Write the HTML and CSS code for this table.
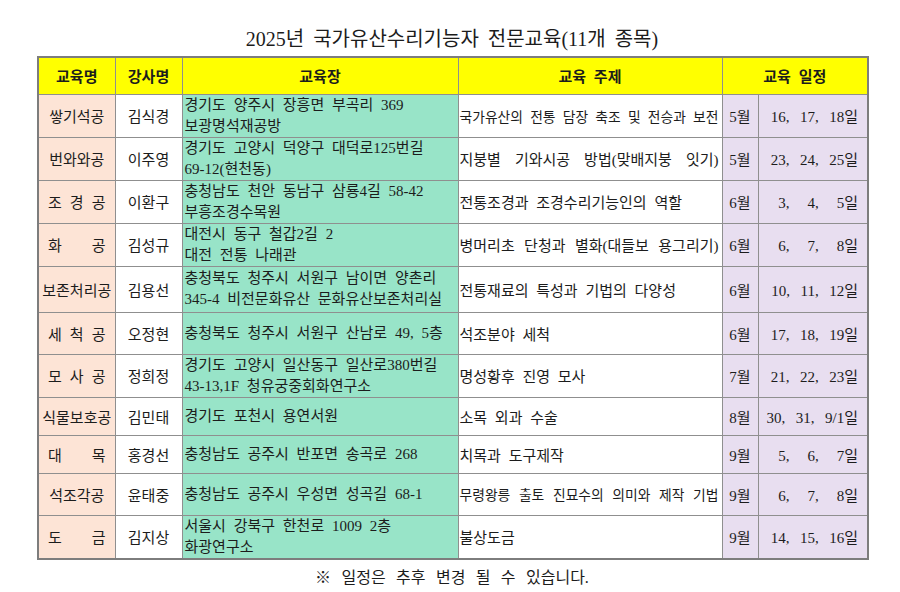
FILE: index.html
```html
<!DOCTYPE html>
<html lang="ko">
<head>
<meta charset="utf-8">
<title>2025년 국가유산수리기능자 전문교육</title>
<link rel="stylesheet" href="styles.css">
</head>
<body>
<div class="page">
  <h1 class="title">2025년 국가유산수리기능자 전문교육(11개 종목)</h1>
  <table class="sched">
    <colgroup>
      <col class="w1"><col class="w2"><col class="w3"><col class="w4"><col class="w5"><col class="w6">
    </colgroup>
    <thead>
      <tr class="h0">
        <th>교육명</th>
        <th>강사명</th>
        <th>교육장</th>
        <th>교육 주제</th>
        <th colspan="2">교육 일정</th>
      </tr>
    </thead>
    <tbody>
      <tr class="r43">
        <td class="c1">쌓기석공</td>
        <td class="c2">김식경</td>
        <td class="c3">경기도 양주시 장흥면 부곡리 369<br>보광명석재공방</td>
        <td class="c4 fit">국가유산의 전통 담장 축조 및 전승과 보전</td>
        <td class="c5">5월</td>
        <td class="c6">16, 17, 18일</td>
      </tr>
      <tr class="r41">
        <td class="c1">번와와공</td>
        <td class="c2">이주영</td>
        <td class="c3">경기도 고양시 덕양구 대덕로125번길<br>69-12(현천동)</td>
        <td class="c4 fit wide">지붕별 기와시공 방법(맞배지붕 잇기)</td>
        <td class="c5">5월</td>
        <td class="c6">23, 24, 25일</td>
      </tr>
      <tr class="r43">
        <td class="c1"><div class="spread"><span>조</span><span>경</span><span>공</span></div></td>
        <td class="c2">이환구</td>
        <td class="c3">충청남도 천안 동남구 삼룡4길 58-42<br>부흥조경수목원</td>
        <td class="c4">전통조경과 조경수리기능인의 역할</td>
        <td class="c5">6월</td>
        <td class="c6">&#8199;3, &#8199;4, &#8199;5일</td>
      </tr>
      <tr class="r41">
        <td class="c1"><div class="spread"><span>화</span><span>공</span></div></td>
        <td class="c2">김성규</td>
        <td class="c3">대전시 동구 철갑2길 2<br>대전 전통 나래관</td>
        <td class="c4 fit wide">병머리초 단청과 별화(대들보 용그리기)</td>
        <td class="c5">6월</td>
        <td class="c6">&#8199;6, &#8199;7, &#8199;8일</td>
      </tr>
      <tr class="r46">
        <td class="c1">보존처리공</td>
        <td class="c2">김용선</td>
        <td class="c3">충청북도 청주시 서원구 남이면 양촌리<br>345-4 비전문화유산 문화유산보존처리실</td>
        <td class="c4">전통재료의 특성과 기법의 다양성</td>
        <td class="c5">6월</td>
        <td class="c6">10, 11, 12일</td>
      </tr>
      <tr class="r42">
        <td class="c1"><div class="spread"><span>세</span><span>척</span><span>공</span></div></td>
        <td class="c2">오정현</td>
        <td class="c3">충청북도 청주시 서원구 산남로 49, 5층</td>
        <td class="c4">석조분야 세척</td>
        <td class="c5">6월</td>
        <td class="c6">17, 18, 19일</td>
      </tr>
      <tr class="r43">
        <td class="c1"><div class="spread"><span>모</span><span>사</span><span>공</span></div></td>
        <td class="c2">정희정</td>
        <td class="c3">경기도 고양시 일산동구 일산로380번길<br>43-13,1F 청유궁중회화연구소</td>
        <td class="c4">명성황후 진영 모사</td>
        <td class="c5">7월</td>
        <td class="c6">21, 22, 23일</td>
      </tr>
      <tr class="r38">
        <td class="c1">식물보호공</td>
        <td class="c2">김민태</td>
        <td class="c3">경기도 포천시 용연서원</td>
        <td class="c4">소목 외과 수술</td>
        <td class="c5">8월</td>
        <td class="c6">30, 31, 9/1일</td>
      </tr>
      <tr class="r38">
        <td class="c1"><div class="spread"><span>대</span><span>목</span></div></td>
        <td class="c2">홍경선</td>
        <td class="c3">충청남도 공주시 반포면 송곡로 268</td>
        <td class="c4">치목과 도구제작</td>
        <td class="c5">9월</td>
        <td class="c6">&#8199;5, &#8199;6, &#8199;7일</td>
      </tr>
      <tr class="r42">
        <td class="c1">석조각공</td>
        <td class="c2">윤태중</td>
        <td class="c3">충청남도 공주시 우성면 성곡길 68-1</td>
        <td class="c4 fit">무령왕릉 출토 진묘수의 의미와 제작 기법</td>
        <td class="c5">9월</td>
        <td class="c6">&#8199;6, &#8199;7, &#8199;8일</td>
      </tr>
      <tr class="r42">
        <td class="c1"><div class="spread"><span>도</span><span>금</span></div></td>
        <td class="c2">김지상</td>
        <td class="c3">서울시 강북구 한천로 1009 2층<br>화광연구소</td>
        <td class="c4">불상도금</td>
        <td class="c5">9월</td>
        <td class="c6">14, 15, 16일</td>
      </tr>
    </tbody>
  </table>
  <p class="note">※ 일정은 추후 변경 될 수 있습니다.</p>
</div>
</body>
</html>
```
FILE: styles.css
```css
html, body {
  margin: 0;
  padding: 0;
  background: #ffffff;
}

body {
  font-family: "Liberation Serif", "Noto Sans CJK KR", serif;
  color: #1c1c1c;
  word-spacing: 0.25em;
}

.page {
  width: 830px;
  margin-left: 37px;
}

.title {
  margin: 0;
  padding-top: 26px;
  height: 30px;
  font-size: 20px;
  line-height: 26px;
  font-weight: 400;
  text-align: center;
  white-space: nowrap;
}

.sched {
  width: 830px;
  table-layout: fixed;
  border-collapse: collapse;
  border: 2px solid #7d7d7d;
  font-size: 15px;
}

.w1 { width: 77px; }
.w2 { width: 67px; }
.w3 { width: 276px; }
.w4 { width: 264px; }
.w5 { width: 36px; }
.w6 { width: 110px; }

.sched th,
.sched td {
  border: 1px solid #8f8f8f;
  padding: 0;
  vertical-align: middle;
  white-space: nowrap;
  overflow: visible;
}

.sched th {
  background: #ffff00;
  font-weight: 700;
  font-size: 15px;
  text-align: center;
}

.h0 { height: 37px; }
.r38 { height: 38px; }
.r41 { height: 41px; }
.r42 { height: 42px; }
.r43 { height: 43px; }
.r46 { height: 46px; }

.c1 {
  background: #fde4d6;
  text-align: center;
}

.spread {
  display: flex;
  justify-content: space-between;
  padding: 0 9px;
}

.c2 {
  background: #ffffff;
  text-align: center;
}

.c3 {
  background: #98e4c8;
  text-align: left;
  padding-left: 2px !important;
  line-height: 21px;
}

.c4 {
  background: #ffffff;
  text-align: left;
  padding-left: 1px !important;
}

.c4.fit {
  font-size: 13.8px;
  word-spacing: 0;
  text-align: justify;
  text-align-last: justify;
  padding-right: 3px !important;
}

.c4.fit.wide {
  font-size: 15px;
}

.c5 {
  background: #e8def0;
  text-align: center;
}

.c6 {
  background: #e8def0;
  text-align: right;
  padding-right: 9px !important;
  word-spacing: 0.45em;
}

.note {
  margin: 8px 0 0;
  font-size: 16px;
  line-height: 20px;
  text-align: center;
  word-spacing: 0.4em;
}
```
